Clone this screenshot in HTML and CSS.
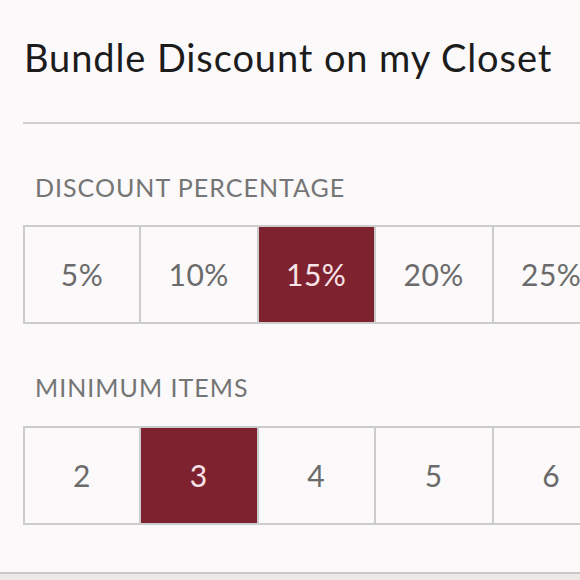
FILE: index.html
```html
<!DOCTYPE html>
<html lang="en">
<head>
    <meta charset="UTF-8">
    <meta name="viewport" content="width=device-width, initial-scale=1.0">
    <title>Bundle Discount</title>
    <link rel="stylesheet" href="styles.css">
</head>
<body>

<div class="sheet">
    <h1 class="title">Bundle Discount on my Closet</h1>
    <div class="divider"></div>

    <p class="label">DISCOUNT PERCENTAGE</p>
    <div class="options">
        <div class="option">5%</div>
        <div class="option">10%</div>
        <div class="option selected">15%</div>
        <div class="option">20%</div>
        <div class="option">25%</div>
    </div>

    <p class="label label-items">MINIMUM ITEMS</p>
    <div class="options">
        <div class="option">2</div>
        <div class="option selected">3</div>
        <div class="option">4</div>
        <div class="option">5</div>
        <div class="option">6</div>
    </div>
</div>

<div class="footer-bar"></div>

</body>
</html>
```

FILE: styles.css
```css
body {
    font-family: Lato, "Open Sans", Arial, sans-serif;
    background-color: #fbf9fa;
    margin: 0;
    padding: 0;
    width: 580px;
    height: 580px;
    overflow: hidden;
    display: flex;
    flex-direction: column;
}

.sheet {
    flex: 1;
    padding-top: 34px;
}

.title {
    margin: 0 0 42px 24px;
    font-size: 38px;
    line-height: 46px;
    font-weight: 400;
    letter-spacing: 0.9px;
    color: #1c1c1c;
    white-space: nowrap;
}

.divider {
    margin-left: 23px;
    border-top: 2px solid #cfcfcf;
}

.label {
    margin: 48px 0 23px 35px;
    font-size: 25px;
    line-height: 30px;
    letter-spacing: 1px;
    color: #757575;
}

.label-items {
    margin-top: 48px;
    margin-bottom: 24px;
}

.options {
    display: flex;
    margin-left: 23px;
    height: 99px;
    box-sizing: border-box;
    border-top: 2px solid #cccccc;
    border-bottom: 2px solid #cccccc;
    border-left: 2px solid #cccccc;
}

.option {
    flex: 0 0 117.5px;
    box-sizing: border-box;
    border-right: 2px solid #cccccc;
    display: flex;
    justify-content: center;
    align-items: center;
    padding-bottom: 2px;
    font-size: 30px;
    letter-spacing: 0.5px;
    color: #6b6b6b;
}

.option:first-child {
    flex-basis: 116px;
}

.option.selected {
    background-color: #7f2230;
    color: #f7e4e7;
}

.footer-bar {
    height: 6px;
    border-top: 2px solid #c8c8c8;
    background-color: #ebe9e6;
}
```
